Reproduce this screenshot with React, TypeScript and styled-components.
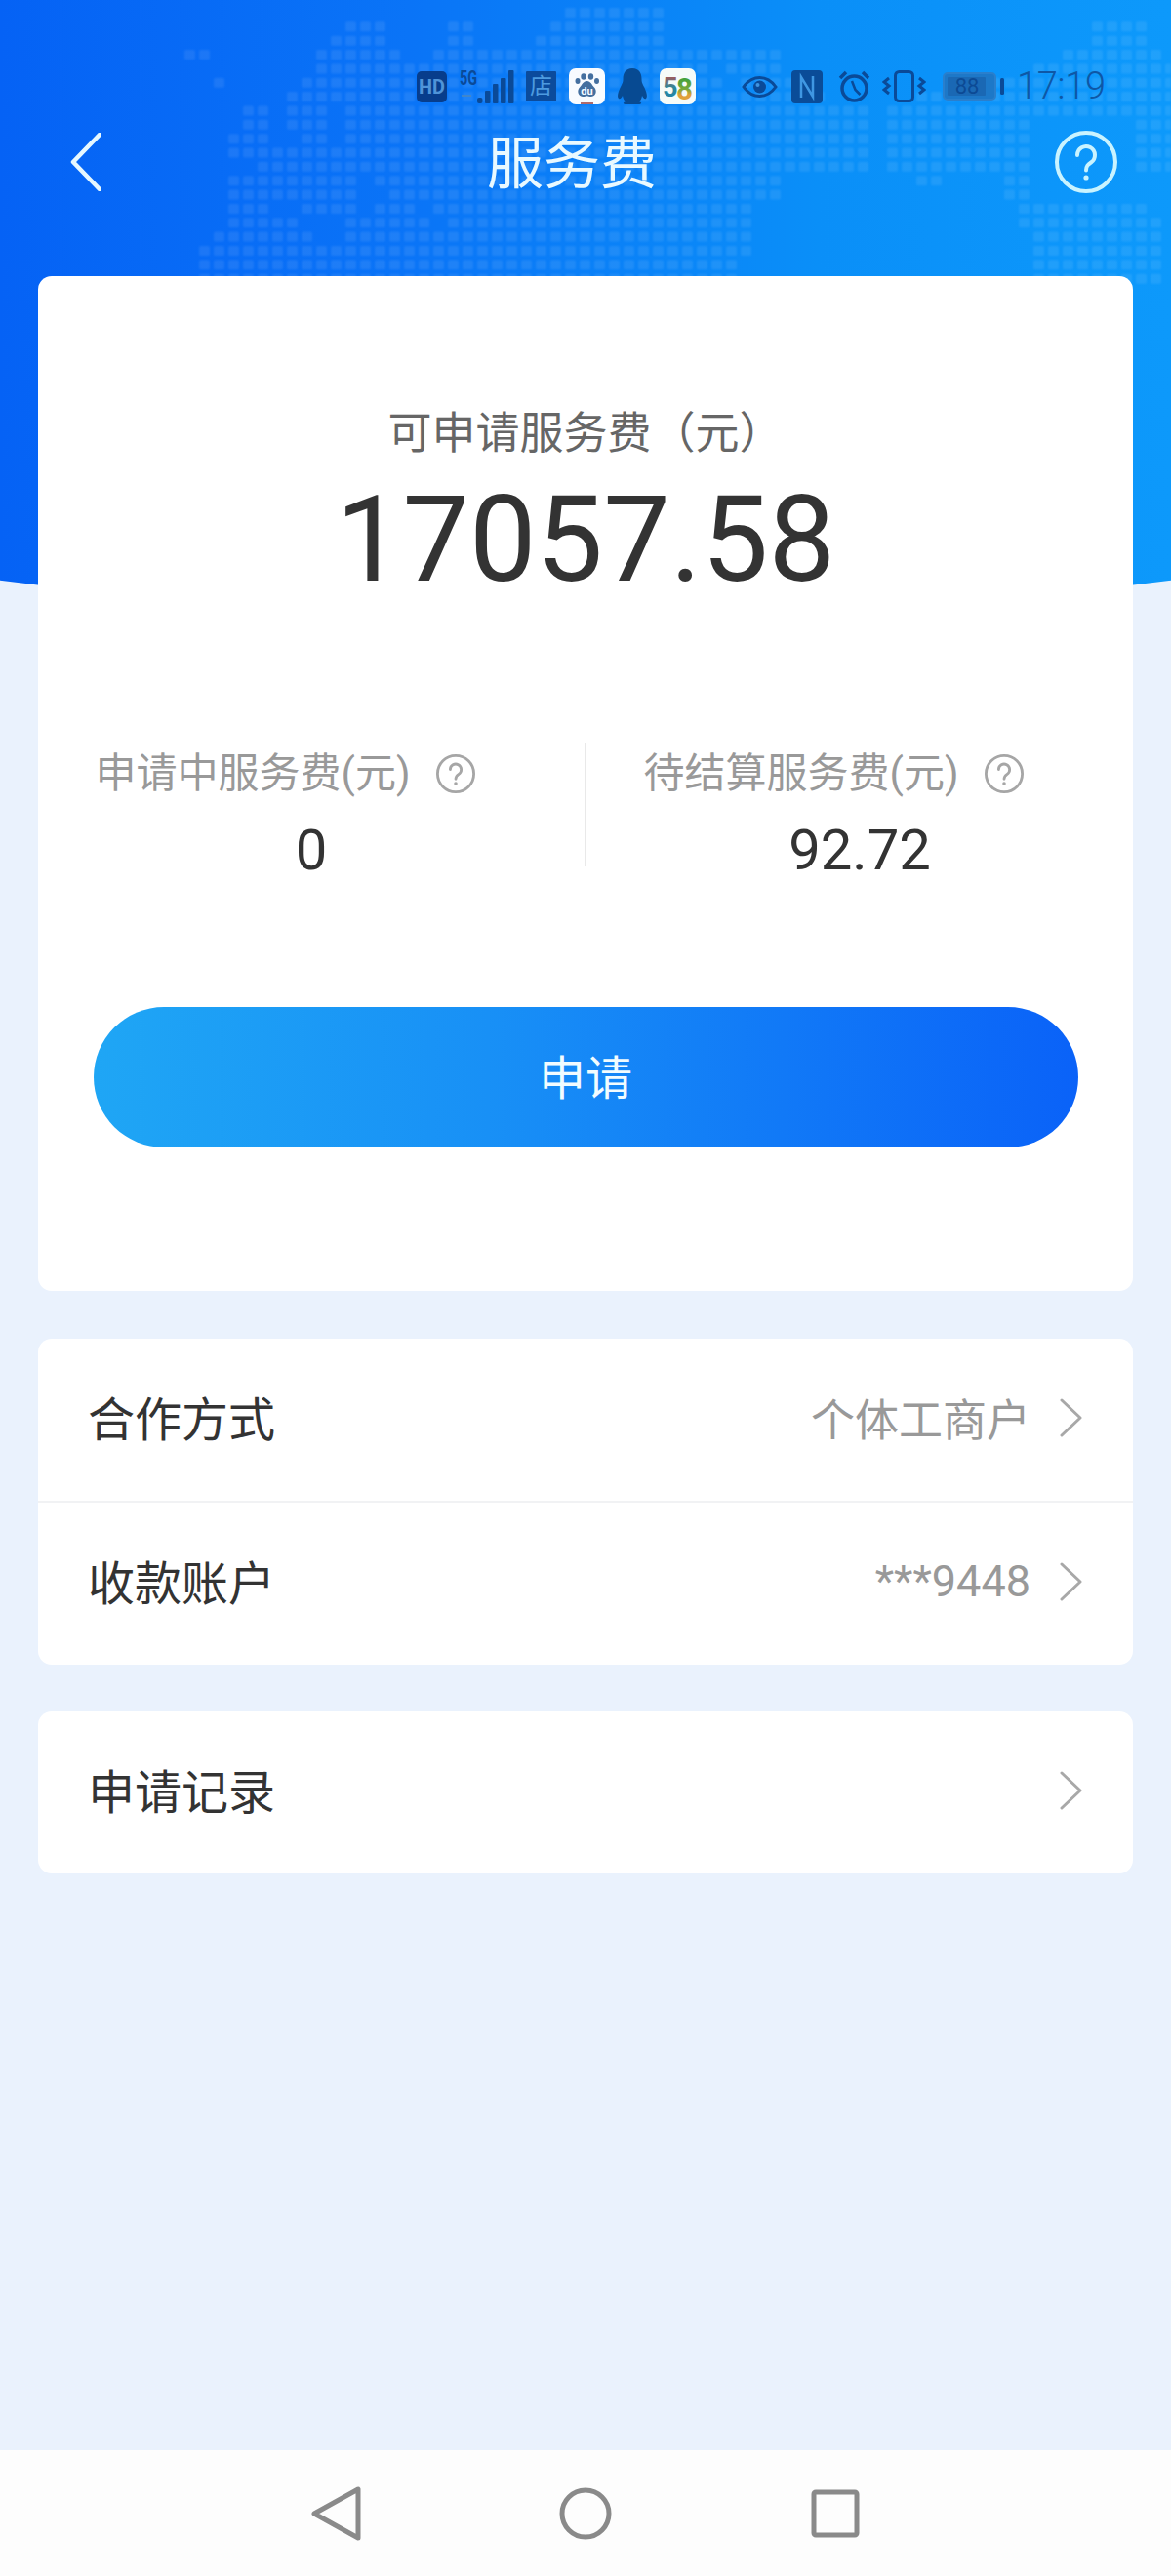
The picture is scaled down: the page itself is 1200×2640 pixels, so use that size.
import React from "react";
import styled, { createGlobalStyle } from "styled-components";

const GlobalStyle = createGlobalStyle`
  html, body { margin: 0; padding: 0; background: #eaf2fd; }
  * { box-sizing: border-box; }
`;

const Page = styled.div`
  position: relative;
  width: 1200px;
  height: 2640px;
  display: flex;
  flex-direction: column;
  overflow: hidden;
  background: #eaf2fd;
  font-family: Roboto, "Noto Sans CJK SC", sans-serif;
`;

const Hero = styled.div`
  position: absolute;
  top: 0;
  left: 0;
  width: 1200px;
  height: 640px;
  background: linear-gradient(90deg, #0562f5 0%, #0a74f7 35%, #0a8ff8 70%, #0d99fb 100%);
  clip-path: circle(4600px at 600px -3966px);
`;

const MapDots = styled.svg`
  position: absolute;
  top: 0;
  left: 0;
  filter: blur(1px);
`;

const StatusBar = styled.div`
  position: relative;
  display: flex;
  align-items: center;
  height: 37px;
  margin-top: 70px;
  padding-left: 427px;
  gap: 12px;
`;

const StatusIcon = styled.svg<{ $gapBefore?: number }>`
  flex: none;
  display: block;
  margin-left: ${(p) => p.$gapBefore ?? 0}px;
`;

const ShopTile = styled.span`
  flex: none;
  display: flex;
  align-items: center;
  justify-content: center;
  width: 31px;
  height: 31px;
  background: #0b4b9c;
  border-radius: 1px;
  font-size: 23px;
  line-height: 31px;
  color: #4d9be0;
`;

const Clock = styled.span`
  margin-left: 1px;
  font-size: 38px;
  font-weight: 300;
  line-height: 37px;
  color: #0e57a6;
  letter-spacing: -0.3px;
`;

const NavBar = styled.div`
  position: relative;
  display: flex;
  align-items: center;
  height: 65px;
  margin-top: 26px;
  padding: 0 55px 0 72px;
`;

const Title = styled.h1`
  margin: 5px 0 0 395px;
  font-size: 58px;
  font-weight: 400;
  line-height: 65px;
  color: #e9f9ff;
`;

const NavSpacer = styled.div`
  flex: 1;
`;

const Cards = styled.main`
  position: relative;
  display: flex;
  flex-direction: column;
  margin: 85px 39px 0;
`;

const Card = styled.section<{ $gap?: number }>`
  margin-top: ${(p) => p.$gap ?? 0}px;
  background: #ffffff;
  border-radius: 14px;
`;

const BalanceBody = styled.div`
  display: flex;
  flex-direction: column;
  align-items: center;
  padding: 132px 57px 147px;
`;

const BalanceLabel = styled.div`
  font-size: 45px;
  line-height: 60px;
  color: #666666;
`;

const BalanceAmount = styled.div`
  margin-top: 14px;
  font-size: 122px;
  line-height: 130px;
  color: #333333;
`;

const Stats = styled.div`
  display: flex;
  width: 1122px;
  margin-top: 142px;
`;

const StatColumn = styled.div`
  flex: 1;
  display: flex;
  flex-direction: column;
  align-items: center;
`;

const StatDivider = styled.div`
  flex: none;
  width: 2px;
  height: 127px;
  background: #e9e9e9;
`;

const StatLabelRow = styled.div`
  display: flex;
  align-items: center;
  gap: 26px;
  height: 64px;
  padding-right: 54px;
`;

const StatLabel = styled.span`
  font-size: 42px;
  line-height: 64px;
  color: #999999;
  white-space: nowrap;
`;

const StatValue = styled.div`
  margin-top: 14px;
  font-size: 58px;
  line-height: 64px;
  color: #333333;
`;

const ApplyButton = styled.button`
  width: 1009px;
  height: 144px;
  margin-top: 129px;
  padding: 0 0 6px;
  border: 0;
  border-radius: 72px;
  background: linear-gradient(90deg, #1fa6f5 0%, #1890f6 40%, #0a62f8 100%);
  font-family: inherit;
  font-size: 48px;
  color: #f2fcff;
`;

const Row = styled.div<{ $divided?: boolean }>`
  display: flex;
  align-items: center;
  height: ${(p) => (p.$divided ? 168 : 166)}px;
  padding: 0 52px 4px 51px;
  border-bottom: ${(p) => (p.$divided ? "2px solid #f1f2f4" : "0")};
`;

const RowTitle = styled.span`
  flex: 1;
  margin-bottom: 4px;
  font-size: 48px;
  color: #333333;
`;

const RowValue = styled.span`
  margin: 0 30px 2px 0;
  font-size: 45px;
  color: #999999;
`;

const BottomNav = styled.nav`
  margin-top: auto;
  position: relative;
  display: flex;
  align-items: center;
  justify-content: center;
  gap: 192px;
  height: 129px;
  background: #fdfdfd;
`;

const NavIcon = styled.svg`
  display: block;
  width: 64px;
  height: 64px;
  fill: none;
  stroke: #8a8a8a;
  stroke-width: 5;
  stroke-linejoin: round;
`;

type Span = [number, number];
const MAP_ROWS: Span[][] = [
  [[26, 32]],
  [[11, 13], [18, 19], [25, 32], [62, 65]],
  [[10, 13], [18, 19], [24, 32], [62, 65]],
  [[0, 1], [9, 14], [17, 35], [36, 40], [60, 66]],
  [[9, 35], [37, 40], [58, 67]],
  [[2, 2], [8, 36], [38, 41], [55, 67]],
  [[7, 43], [50, 67]],
  [[4, 5], [7, 9], [11, 46], [48, 67]],
  [[4, 5], [7, 9], [11, 46], [48, 57], [65, 67]],
  [[3, 5], [8, 9], [11, 46], [48, 57], [65, 67]],
  [[3, 46], [48, 57], [65, 67]],
  [[5, 46], [48, 57], [65, 67]],
  [[3, 11], [13, 40], [50, 51], [56, 57]],
  [[3, 11], [14, 40], [56, 57]],
  [[3, 5], [8, 11], [13, 15], [17, 38], [57, 65]],
  [[3, 7], [11, 16], [18, 38], [57, 66]],
  [[2, 8], [11, 38], [58, 66]],
  [[1, 38], [58, 66]],
  [[1, 13], [14, 37], [58, 66]],
  [[1, 37], [58, 66]],
];

const WorldMap = () => (
  <MapDots width="1200" height="300" viewBox="0 0 1200 300">
    {MAP_ROWS.flatMap((spans, r) =>
      spans.flatMap(([a, b]) =>
        Array.from({ length: b - a + 1 }, (_, i) => (
          <rect
            key={`${r}-${a + i}`}
            x={189 + (a + i) * 15}
            y={8 + r * 14.35}
            width="11"
            height="10"
            rx="1.5"
            fill="#ffffff"
            fillOpacity="0.085"
          />
        ))
      )
    )}
  </MapDots>
);

const NAVY = "#0a4a98";

const HelpIcon = ({ size, color, stroke }: { size: number; color: string; stroke: number }) => (
  <svg width={size} height={size} viewBox="0 0 64 64" fill="none" style={{ flex: "none", display: "block" }}>
    <circle cx="32" cy="32" r={32 - stroke / 2} stroke={color} strokeWidth={stroke} />
    <path d="M23 25a9 9 0 1 1 14 7.500c-3 2-5 3.500-5 8" stroke={color} strokeWidth={stroke} strokeLinecap="round" />
    <circle cx="32" cy="48" r={stroke * 0.65} fill={color} />
  </svg>
);

const Chevron = () => (
  <svg width="23" height="40" viewBox="0 0 23 40" fill="none" style={{ flex: "none", display: "block" }}>
    <path d="M2 2l19 18L2 38" stroke="#a8a8a8" strokeWidth="3" strokeLinecap="round" strokeLinejoin="round" />
  </svg>
);

const StatusIcons = () => (
  <>
    <StatusIcon width="31" height="32" viewBox="0 0 31 32">
      <rect width="31" height="32" rx="5" fill="#073d8c" />
      <text x="15.500" y="23" textAnchor="middle" fontSize="20" fontWeight="700" fontFamily="Roboto, sans-serif" fill="#4f94d8" textLength="27" lengthAdjust="spacingAndGlyphs">HD</text>
    </StatusIcon>
    <StatusIcon width="56" height="46" viewBox="0 -6 56 46" $gapBefore={1}>
      <text x="0" y="15" fontSize="20" fontWeight="700" fontFamily="Roboto, sans-serif" fill={NAVY} textLength="18" lengthAdjust="spacingAndGlyphs">5G</text>
      <rect x="2" y="25" width="10" height="2" fill="#3f86cc" />
      <rect x="18" y="28" width="5.500" height="6" rx="2" fill={NAVY} />
      <rect x="26" y="21" width="5.500" height="13" rx="1" fill={NAVY} />
      <rect x="34" y="14" width="5.500" height="20" rx="1" fill={NAVY} />
      <rect x="42" y="8" width="5.500" height="26" rx="1" fill={NAVY} />
      <rect x="50" y="0" width="5.500" height="34" rx="1" fill={NAVY} />
    </StatusIcon>
    <ShopTile>店</ShopTile>
    <StatusIcon width="37" height="37" viewBox="0 0 37 37" $gapBefore={1}>
      <rect width="37" height="37" rx="7" fill="#f8fbff" />
      <g fill="#446f9f">
        <ellipse cx="9" cy="13" rx="2.500" ry="3" />
        <ellipse cx="15" cy="8.500" rx="2.700" ry="3.200" />
        <ellipse cx="22.500" cy="8.500" rx="2.700" ry="3.200" />
        <ellipse cx="28.500" cy="13" rx="2.500" ry="3" />
        <path d="M18.500 13c-4 0-5 4-7.500 6.500-3 3-2 9 3 9.500 2 .2 3-.8 4.500-.8s2.500 1 4.500.8c5-.5 6-6.500 3-9.500C23.500 17 22.500 13 18.500 13Z" />
      </g>
      <text x="18.500" y="26.500" textAnchor="middle" fontSize="11" fontWeight="700" fontFamily="Roboto, sans-serif" fill="#f8fbff">du</text>
      <rect x="12" y="35" width="13" height="2" fill="#b06a6a" />
    </StatusIcon>
    <StatusIcon width="32" height="37" viewBox="0 0 32 37">
      <path
        fill="#074a92"
        d="M16 0C9 0 6.500 5 6.500 11c0 3-.5 4-2.500 8-2.500 5-4 10-2 12 1.500 1 3-1 4-3 .5 3 1.500 5 3 6-3 1-3 3 1 3h12c4 0 4-2 1-3 1.500-1 2.500-3 3-6 1 2 2.500 4 4 3 2-2 .5-7-2-12-2-4-2.500-5-2.500-8C25.500 5 23 0 16 0Z"
      />
    </StatusIcon>
    <StatusIcon width="37" height="47" viewBox="0 -5 37 47">
      <defs>
        <linearGradient id="five" x1="0" y1="0" x2="0" y2="1">
          <stop offset="0" stopColor="#d2453f" />
          <stop offset="0.5" stopColor="#2a8a9c" />
          <stop offset="1" stopColor="#1f7fb0" />
        </linearGradient>
        <linearGradient id="eight" x1="0" y1="0" x2="0" y2="1">
          <stop offset="0.1" stopColor="#2f9e3a" />
          <stop offset="0.5" stopColor="#7aa83a" />
          <stop offset="0.65" stopColor="#e0a03a" />
          <stop offset="1" stopColor="#e2a23c" />
        </linearGradient>
      </defs>
      <rect width="37" height="37" rx="7" fill="#f6fbf8" />
      <text x="3" y="29" fontSize="27" fontWeight="700" fontFamily="Roboto, sans-serif" fill="url(#five)">5</text>
      <text x="17" y="32" fontSize="31" fontWeight="700" fontFamily="Roboto, sans-serif" fill="url(#eight)" textLength="17" lengthAdjust="spacingAndGlyphs">8</text>
    </StatusIcon>
    <StatusIcon width="37" height="22" viewBox="0 0 37 22" $gapBefore={35}>
      <path d="M2 11C7 4 12 1.500 18.500 1.500S30 4 35 11c-5 7-10 9.500-16.500 9.500S7 18 2 11Z" fill="none" stroke={NAVY} strokeWidth="3" />
      <circle cx="18.500" cy="11" r="6.500" fill={NAVY} />
      <circle cx="16.500" cy="9" r="2" fill="#3f94e0" />
    </StatusIcon>
    <StatusIcon width="32" height="34" viewBox="0 0 32 34" $gapBefore={2}>
      <rect width="32" height="34" rx="4" fill="#0a4c98" />
      <path d="M10 28V7l12 20V6" fill="none" stroke="#3f97e2" strokeWidth="2.500" />
    </StatusIcon>
    <StatusIcon width="33" height="33" viewBox="0 0 33 33" $gapBefore={4}>
      <circle cx="16.500" cy="18.500" r="12.500" fill="none" stroke={NAVY} strokeWidth="3.500" />
      <path d="M14 11l3.500 9 5 5" fill="none" stroke={NAVY} strokeWidth="2.500" />
      <path d="M2 8l6-6M31 8l-6-6" fill="none" stroke={NAVY} strokeWidth="3.500" />
    </StatusIcon>
    <StatusIcon width="45" height="33" viewBox="0 0 45 33">
      <rect x="13.500" y="1.500" width="18" height="30" rx="4" fill="none" stroke={NAVY} strokeWidth="3" />
      <path d="M7 8l-5 4 5 4-5 4 5 4M38 8l5 4-5 4 5 4-5 4" fill="none" stroke={NAVY} strokeWidth="3" />
    </StatusIcon>
    <StatusIcon width="63" height="29" viewBox="0 0 63 29" $gapBefore={5}>
      <rect x="1" y="1" width="53" height="27" rx="4" fill="#1d78c8" stroke="#2a7fcc" strokeWidth="2" />
      <rect x="5" y="5" width="39" height="19" rx="1" fill="#1a68b4" />
      <text x="25" y="22" textAnchor="middle" fontSize="22" fontFamily="Roboto, sans-serif" fill="#0c4a94">88</text>
      <rect x="59" y="6" width="4" height="17" rx="1.500" fill={NAVY} />
    </StatusIcon>
  </>
);

export default function App() {
  return (
    <Page>
      <GlobalStyle />
      <Hero>
        <WorldMap />
      </Hero>
      <StatusBar>
        <StatusIcons />
        <Clock>17:19</Clock>
      </StatusBar>
      <NavBar>
        <svg width="32" height="60" viewBox="0 0 32 60" fill="none" style={{ flex: "none", display: "block" }}>
          <path d="M30 2L3 30l27 28" stroke="#e6f8ff" strokeWidth="4.500" strokeLinecap="round" strokeLinejoin="round" />
        </svg>
        <Title>服务费</Title>
        <NavSpacer />
        <HelpIcon size={64} color="#c9f3ff" stroke={4} />
      </NavBar>
      <Cards>
        <Card>
          <BalanceBody>
            <BalanceLabel>可申请服务费（元）</BalanceLabel>
            <BalanceAmount>17057.58</BalanceAmount>
            <Stats>
              <StatColumn>
                <StatLabelRow>
                  <StatLabel>申请中服务费(元)</StatLabel>
                  <HelpIcon size={40} color="#a6a6a6" stroke={4.5} />
                </StatLabelRow>
                <StatValue>0</StatValue>
              </StatColumn>
              <StatDivider />
              <StatColumn>
                <StatLabelRow>
                  <StatLabel>待结算服务费(元)</StatLabel>
                  <HelpIcon size={40} color="#a6a6a6" stroke={4.5} />
                </StatLabelRow>
                <StatValue>92.72</StatValue>
              </StatColumn>
            </Stats>
            <ApplyButton>申请</ApplyButton>
          </BalanceBody>
        </Card>
        <Card $gap={49}>
          <Row $divided>
            <RowTitle>合作方式</RowTitle>
            <RowValue>个体工商户</RowValue>
            <Chevron />
          </Row>
          <Row>
            <RowTitle>收款账户</RowTitle>
            <RowValue>***9448</RowValue>
            <Chevron />
          </Row>
        </Card>
        <Card $gap={48}>
          <Row>
            <RowTitle>申请记录</RowTitle>
            <Chevron />
          </Row>
        </Card>
      </Cards>
      <BottomNav>
        <NavIcon viewBox="0 0 64 64">
          <path d="M55 7v50L10 32Z" />
        </NavIcon>
        <NavIcon viewBox="0 0 64 64">
          <circle cx="32" cy="32" r="24" />
        </NavIcon>
        <NavIcon viewBox="0 0 64 64">
          <rect x="10" y="10" width="44" height="44" rx="2" />
        </NavIcon>
      </BottomNav>
    </Page>
  );
}
